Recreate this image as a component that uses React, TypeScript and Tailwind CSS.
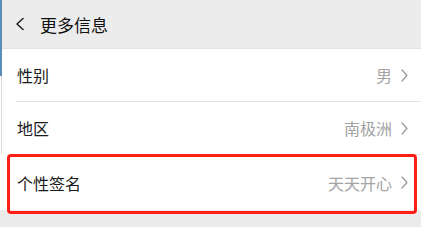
import React from "react";

const Chevron = () => (
  <svg width="7" height="13" viewBox="0 0 7 13" fill="none" className="shrink-0">
    <path d="M1 1L6 6.5L1 12" stroke="#9a9a9a" strokeWidth="1.3" strokeLinecap="round" strokeLinejoin="round" />
  </svg>
);

const Row = ({ label, value, h }: { label: string; value: string; h: string }) => (
  <div className={`flex items-center justify-between bg-white pl-[17px] pr-[13px] ${h}`}>
    <span className="text-[16px] text-[#1a1a1a] leading-none">{label}</span>
    <div className="flex items-center gap-[9px]">
      <span className="text-[16px] text-[#a3a3a3] leading-none">{value}</span>
      <Chevron />
    </div>
  </div>
);

export default function App() {
  return (
    <div
      className="relative w-[421px] h-[227px] bg-[#ebebeb] overflow-hidden"
      style={{ fontFamily: '"Noto Sans CJK SC", "Noto Sans", sans-serif' }}
    >
      <div className="flex h-[49px] items-center bg-[#ececec] border-b border-[#e2e2e2]">
        <svg width="12" height="14" viewBox="0 0 12 14" fill="none" className="ml-[14px]">
          <path d="M9 1.5L3 7L9 12.5" stroke="#222" strokeWidth="1.6" strokeLinecap="round" strokeLinejoin="round" />
        </svg>
        <span className="ml-[14px] text-[17px] text-[#111] leading-none">更多信息</span>
      </div>
      <Row label="性别" value="男" h="h-[52px]" />
      <div className="bg-white pl-[16px]">
        <div className="h-px bg-[#e3e3e3]" />
      </div>
      <Row label="地区" value="南极洲" h="h-[52px]" />
      <div className="bg-white pl-[16px]">
        <div className="h-px bg-[#e3e3e3]" />
      </div>
      <Row label="个性签名" value="天天开心" h="h-[55px]" />

      <div className="absolute left-0 top-0 w-[2px] h-[76px] bg-[#5b8db8]" />
      <div className="absolute left-[1px] top-[76px] w-px h-[78px] bg-[#dcdcdc]" />
      <div className="absolute left-[7px] top-[154px] w-[410px] h-[60px] border-[3px] border-[#ff1f14] rounded-[4px]" />
    </div>
  );
}
